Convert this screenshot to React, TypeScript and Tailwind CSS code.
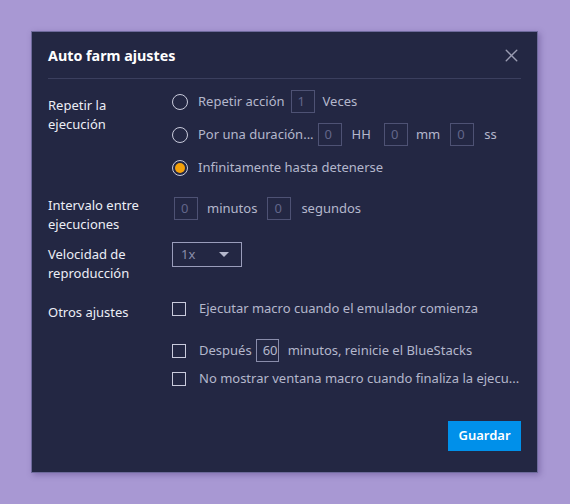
import { X } from "lucide-react";

function Box({ value, w = "w-[24px]", light }: { value: string; w?: string; light?: boolean }) {
  return (
    <span
      className={`inline-flex h-[23px] ${w} items-center border pl-[6px] text-[13px] ${
        light ? "border-[#8a8dab] text-[#b4b7cc]" : "border-[#4e5274] text-[#62668a]"
      }`}
    >
      {value}
    </span>
  );
}

function Radio({ checked }: { checked?: boolean }) {
  return (
    <span className="flex h-[16px] w-[16px] shrink-0 items-center justify-center rounded-full border-[1.5px] border-[#c9cbdc]">
      {checked && <span className="h-[10px] w-[10px] rounded-full bg-[#f5a10a]" />}
    </span>
  );
}

function Check() {
  return <span className="h-[14px] w-[14px] shrink-0 border-[1.5px] border-[#c9cbdc]" />;
}

export default function App() {
  return (
    <div
      className="h-[504px] w-[570px] bg-[#a898d3] pl-[31px] pt-[31px]"
      style={{ fontFamily: '"Noto Sans", "Open Sans", sans-serif' }}
    >
      <div className="flex h-[442px] w-[507px] flex-col border border-[#6e6a9c] bg-[#232743] px-[16px] shadow-[2px_2px_6px_rgba(60,40,110,0.35)]">
        <div className="flex h-[46px] items-end justify-between pb-[15px]">
          <h2 className="text-[14.3px] font-bold leading-none text-white">Auto farm ajustes</h2>
          <X className="mb-[-3px] mr-[-1px] h-[21px] w-[21px] text-[#9a9cb2]" strokeWidth={1.6} />
        </div>
        <div className="h-px bg-[#3b3f5e]" />

        <div className="mt-[11px] flex text-[13px] leading-[19px]">
          <div className="w-[124px] pt-[6px] text-[#eceef6]">
            Repetir la
            <br />
            ejecución
          </div>
          <div className="flex flex-col gap-[10px] text-[#b4b7cc]">
            <div className="flex h-[23px] items-center">
              <Radio />
              <span className="ml-[10px]">Repetir acción</span>
              <span className="ml-[6px]"><Box value="1" /></span>
              <span className="ml-[8px]">Veces</span>
            </div>
            <div className="flex h-[23px] items-center">
              <Radio />
              <span className="ml-[10px]">Por una duración...</span>
              <span className="ml-[4px]"><Box value="0" /></span>
              <span className="ml-[10px]">HH</span>
              <span className="ml-[13px]"><Box value="0" /></span>
              <span className="ml-[8px]">mm</span>
              <span className="ml-[10px]"><Box value="0" /></span>
              <span className="ml-[10px]">ss</span>
            </div>
            <div className="flex h-[23px] items-center">
              <Radio checked />
              <span className="ml-[10px]">Infinitamente hasta detenerse</span>
            </div>
          </div>
        </div>

        <div className="mt-[17px] flex text-[13px] leading-[19px]">
          <div className="w-[124px] text-[#eceef6]">
            Intervalo entre
            <br />
            ejecuciones
          </div>
          <div className="flex h-[23px] items-center pl-[2px] pt-[1px] text-[#b4b7cc]">
            <Box value="0" />
            <span className="ml-[9px]">minutos</span>
            <span className="ml-[10px]"><Box value="0" /></span>
            <span className="ml-[10px]">segundos</span>
          </div>
        </div>

        <div className="mt-[11px] flex text-[13px] leading-[19px]">
          <div className="w-[124px] text-[#eceef6]">
            Velocidad de
            <br />
            reproducción
          </div>
          <div className="-mt-[3px]">
            <div className="flex h-[25px] w-[70px] items-center justify-between border border-[#9a9dbb] pl-[8px] pr-[12px] text-[#8a8eaa]">
              <span>1x</span>
              <span className="h-0 w-0 border-x-[5px] border-t-[5px] border-x-transparent border-t-[#b4b7cc]" />
            </div>
          </div>
        </div>

        <div className="mt-[14px] flex text-[13px] leading-[19px]">
          <div className="w-[124px] pt-[6px] text-[#eceef6]">Otros ajustes</div>
          <div className="flex flex-col text-[#b4b7cc]">
            <div className="flex h-[23px] items-center">
              <Check />
              <span className="ml-[13px]">Ejecutar macro cuando el emulador comienza</span>
            </div>
            <div className="mt-[19px] flex h-[23px] items-center">
              <Check />
              <span className="ml-[13px]">Después</span>
              <span className="ml-[4px]"><Box value="60" w="w-[23px]" light /></span>
              <span className="ml-[9px]">minutos, reinicie el BlueStacks</span>
            </div>
            <div className="mt-[5px] flex h-[23px] items-center">
              <Check />
              <span className="ml-[13px]">No mostrar ventana macro cuando finaliza la ejecu...</span>
            </div>
          </div>
        </div>

        <div className="mt-auto mb-[21px] flex justify-end">
          <button className="h-[30px] w-[73px] bg-[#0090ea] text-[13px] font-semibold text-white">Guardar</button>
        </div>
      </div>
    </div>
  );
}
